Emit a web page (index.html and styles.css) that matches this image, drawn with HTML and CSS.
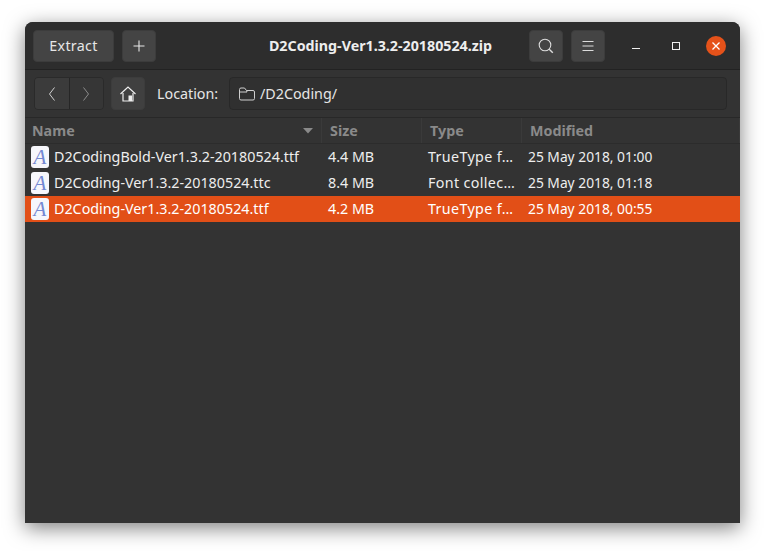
FILE: index.html
```html
<!DOCTYPE html>
<html lang="en">
<head>
<meta charset="utf-8">
<title>D2Coding-Ver1.3.2-20180524.zip</title>
<link rel="stylesheet" href="styles.css">
</head>
<body>
<div class="window">
  <header class="titlebar">
    <div class="group">
      <button class="btn extract">Extract</button>
      <button class="btn icon"><svg width="16" height="16" viewBox="0 0 16 16"><path d="M8 2.500v11M2.500 8h11" stroke="#e8e8e8" stroke-width="1.100" fill="none"/></svg></button>
    </div>
    <div class="title">D2Coding-Ver1.3.2-20180524.zip</div>
    <div class="group right">
      <button class="btn icon"><svg width="18" height="18" viewBox="0 0 18 18"><circle cx="8" cy="8" r="5.800" stroke="#dcdcdc" stroke-width="1.100" fill="none"/><path d="M12.200 12.200l3.600 3.600" stroke="#dcdcdc" stroke-width="1.400"/></svg></button>
      <button class="btn icon"><svg width="16" height="16" viewBox="0 0 16 16"><path d="M2.500 3.500h11M2.500 8h11M2.500 12.500h11" stroke="#dcdcdc" stroke-width="1" fill="none"/></svg></button>
      <div class="wm">
        <svg class="wm-min" width="10" height="10" viewBox="0 0 10 10"><path d="M1 7.500h8" stroke="#f0f0f0" stroke-width="1"/></svg>
        <svg class="wm-max" width="10" height="10" viewBox="0 0 10 10"><rect x="1.500" y="1.500" width="7" height="7" stroke="#f0f0f0" stroke-width="1" fill="none"/></svg>
        <div class="wm-close"><svg width="10" height="10" viewBox="0 0 10 10"><path d="M1.500 1.500l7 7M8.500 1.500l-7 7" stroke="#fff" stroke-width="1.300"/></svg></div>
      </div>
    </div>
  </header>
  <div class="toolbar">
    <div class="nav">
      <button class="nav-btn"><svg width="10" height="16" viewBox="0 0 10 16"><path d="M7.500 1.500L2.500 8l5 6.500" stroke="#d0d0d0" stroke-width="1" fill="none"/></svg></button>
      <button class="nav-btn"><svg width="10" height="16" viewBox="0 0 10 16"><path d="M2.500 1.500L7.500 8l-5 6.500" stroke="#8c8c8c" stroke-width="1" fill="none"/></svg></button>
    </div>
    <button class="btn icon home"><svg width="18" height="18" viewBox="0 0 18 18"><path d="M1.500 9L9 2l7.500 7" stroke="#eee" stroke-width="1.200" fill="none"/><path d="M4 8v8h10V8" stroke="#eee" stroke-width="1.200" fill="none"/><rect x="9.500" y="10.500" width="3.500" height="5.500" fill="#eee"/></svg></button>
    <span class="loc-label">Location:</span>
    <div class="entry">
      <svg width="18" height="16" viewBox="0 0 18 16"><path d="M1.500 3.500q0-1.500 1.500-1.500h3.500l2 2.500H15q1.500 0 1.500 1.500v6.500q0 1.500-1.500 1.500H3q-1.500 0-1.500-1.500zM1.500 6H9l-.5-1.500" stroke="#cfcfcf" stroke-width="1" fill="none"/></svg>
      <span>/D2Coding/</span>
    </div>
  </div>
  <div class="columns">
    <div class="col c-name">Name<svg class="sort" width="10" height="6" viewBox="0 0 10 6"><path d="M0 0h10L5 5.500z" fill="#8a8a8a"/></svg></div>
    <div class="col c-size">Size</div>
    <div class="col c-type">Type</div>
    <div class="col c-mod">Modified</div>
  </div>
  <div class="row">
    <div class="cell c-name"><span class="file">A</span>D2CodingBold-Ver1.3.2-20180524.ttf</div>
    <div class="cell c-size">4.4 MB</div>
    <div class="cell c-type">TrueType f…</div>
    <div class="cell c-mod">25 May 2018, 01:00</div>
  </div>
  <div class="row">
    <div class="cell c-name"><span class="file">A</span>D2Coding-Ver1.3.2-20180524.ttc</div>
    <div class="cell c-size">8.4 MB</div>
    <div class="cell c-type">Font collec…</div>
    <div class="cell c-mod">25 May 2018, 01:18</div>
  </div>
  <div class="row selected">
    <div class="cell c-name"><span class="file">A</span>D2Coding-Ver1.3.2-20180524.ttf</div>
    <div class="cell c-size">4.2 MB</div>
    <div class="cell c-type">TrueType f…</div>
    <div class="cell c-mod">25 May 2018, 00:55</div>
  </div>
</div>
</body>
</html>
```
FILE: styles.css
```css
* { box-sizing: border-box; }
html, body { margin: 0; height: 100%; background: #fff; overflow: hidden; }
body { padding: 22px 25px 28px; font-family: "Noto Sans", sans-serif; font-size: 14.300px; color: #eee; }
button { font: inherit; color: inherit; padding: 0; }
.window { width: 715px; height: 501px; background: #333; border-radius: 8px 8px 0 0; box-shadow: 0 5px 20px rgba(0,0,0,.5); overflow: hidden; }
.titlebar { height: 48px; display: flex; align-items: center; padding: 0 14px 0 8px; background: #2d2d2d; border-bottom: 1px solid #222; position: relative; }
.group { display: flex; align-items: center; gap: 8px; }
.right { margin-left: auto; }
.title { position: absolute; left: 0; right: 0; top: 14px; text-align: center; font-weight: 700; font-size: 14.250px; line-height: 20px; padding-right: 4px; pointer-events: none; }
.btn { height: 32px; background: #444; border: 1px solid #3c3c3c; border-radius: 4px; display: flex; align-items: center; justify-content: center; }
.extract { width: 81px; color: #e6e6e6; letter-spacing: .3px; }
.icon { width: 34px; }
.wm { display: flex; align-items: center; margin-left: 18px; gap: 30px; }
.wm-min, .wm-max { display: block; }
.wm-close { width: 20px; height: 20px; border-radius: 50%; background: #e5521a; display: flex; align-items: center; justify-content: center; margin-left: -5px; }
.toolbar { height: 48px; display: flex; align-items: center; padding: 0 13px 0 9px; background: #333; border-bottom: 1px solid #282828; }
.nav { display: flex; height: 33px; width: 70px; border: 1px solid #2a2a2a; border-radius: 4px; overflow: hidden; margin-right: 7px; }
.nav-btn { flex: 1; background: #3b3b3b; border: 0; display: flex; align-items: center; justify-content: center; }
.nav-btn + .nav-btn { border-left: 1px solid #262626; background: #363636; }
.home { height: 33px; margin-right: 12px; background: #404040; }
.loc-label { width: 72px; color: #e6e6e6; }
.entry { flex: 1; height: 33px; display: flex; align-items: center; gap: 4px; padding-left: 8px; background: #303030; border: 1px solid #282828; border-radius: 4px; color: #e6e6e6; }
.columns { display: flex; height: 26px; background: #333; border-bottom: 1px solid #2c2c2c; }
.col { font-weight: 700; color: #8a8a8a; display: flex; align-items: center; padding-left: 8px; border-right: 1px solid #3a3a3a; position: relative; }
.col.c-name { padding-left: 7px; }
.sort { position: absolute; right: 8px; top: 10px; }
.row { display: flex; height: 26px; align-items: center; color: #eee; }
.cell { white-space: nowrap; padding-bottom: 2px; }
.selected { background: #e24f17; color: #fff; }
.c-name { width: 297px; }
.c-size { width: 100px; }
.c-type { width: 100px; }
.c-mod { flex: 1; }
.cell.c-name { display: flex; align-items: center; gap: 5px; padding-left: 6px; }
.cell.c-size, .cell.c-type, .cell.c-mod { padding-left: 6px; }
.cell.c-type { letter-spacing: .35px; }
.cell.c-mod { font-size: 13.800px; }
.file { width: 18px; height: 22px; margin-top: 2px; background: #f6f6fb; border-radius: 3px; color: #7488d2; font: italic 21px/22px "Liberation Serif", serif; text-align: center; }
```
